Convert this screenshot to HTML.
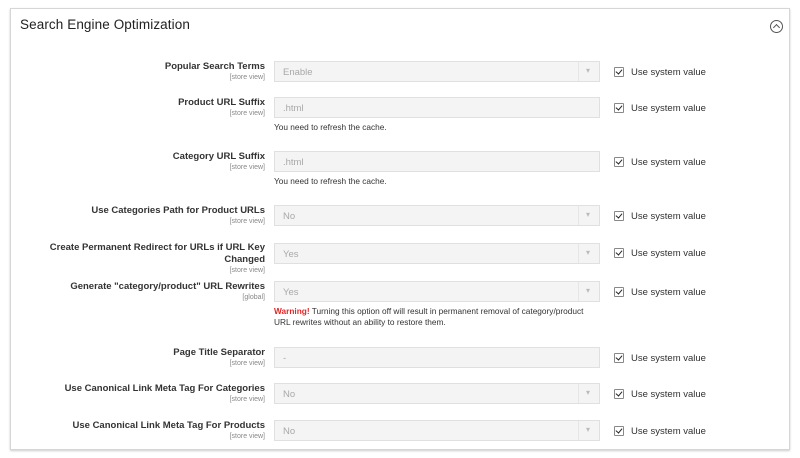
<!DOCTYPE html>
<html><head><style>
body{margin:0;width:800px;height:458px;background:#fff;font-family:"Liberation Sans",sans-serif;position:relative;overflow:hidden}
.box{position:absolute;left:10px;top:8px;width:780px;height:442px;border:1px solid #d6d6d6;box-shadow:0 1px 2px #ccc;box-sizing:border-box}
.title{position:absolute;left:20px;top:17px;font-size:13.5px;color:#222;letter-spacing:0.1px}
.tog{position:absolute;left:770px;top:20px;width:11px;height:11px;border:1px solid #555;border-radius:50%}
.tog:after{content:"";position:absolute;left:3px;top:4px;width:4px;height:4px;border-left:1px solid #555;border-top:1px solid #555;transform:rotate(45deg)}
.lbl{position:absolute;right:535px;text-align:right;font-size:9.5px;font-weight:bold;color:#333;line-height:12px;width:230px}
.lbl small{display:block;font-weight:normal;font-size:7px;color:#888;line-height:9px}
.in{position:absolute;left:274px;width:326px;height:21px;box-sizing:border-box;border:1px solid #e0e0e0;background:#f4f4f4;font-size:9.5px;color:#a8a8a8;padding:5px 0 0 8px}
.sel:after{content:"▾";position:absolute;left:311px;top:4px;font-size:8px;color:#bbb}
.sel:before{content:"";position:absolute;left:303px;top:0;bottom:0;border-left:1px solid #e6e6e6}
.cb{position:absolute;left:614px;width:10px;height:10px;border:1px solid #888;box-sizing:border-box;border-radius:1px}
.cb:after{content:"";position:absolute;left:2px;top:0px;width:3px;height:5px;border-right:1.5px solid #222;border-bottom:1.5px solid #222;transform:rotate(40deg)}
.cbl{position:absolute;left:631px;font-size:9.5px;color:#303030}
.note{position:absolute;left:274px;font-size:8.3px;color:#333;line-height:11px}
.note b{color:#e22626}
</style></head><body>
<div class="box"></div>
<div class="title">Search Engine Optimization</div>
<div class="tog"></div>

<div class="lbl" style="top:61px">Popular Search Terms<small>[store view]</small></div>
<div class="in sel" style="top:61px">Enable</div>
<div class="cb" style="top:67px"></div><div class="cbl" style="top:67px">Use system value</div>

<div class="lbl" style="top:97px">Product URL Suffix<small>[store view]</small></div>
<div class="in" style="top:97px">.html</div>
<div class="note" style="top:122px">You need to refresh the cache.</div>
<div class="cb" style="top:103px"></div><div class="cbl" style="top:103px">Use system value</div>

<div class="lbl" style="top:151px">Category URL Suffix<small>[store view]</small></div>
<div class="in" style="top:151px">.html</div>
<div class="note" style="top:176px">You need to refresh the cache.</div>
<div class="cb" style="top:157px"></div><div class="cbl" style="top:157px">Use system value</div>

<div class="lbl" style="top:205px">Use Categories Path for Product URLs<small>[store view]</small></div>
<div class="in sel" style="top:205px">No</div>
<div class="cb" style="top:211px"></div><div class="cbl" style="top:211px">Use system value</div>

<div class="lbl" style="top:242px">Create Permanent Redirect for URLs if URL Key Changed<small>[store view]</small></div>
<div class="in sel" style="top:243px">Yes</div>
<div class="cb" style="top:248px"></div><div class="cbl" style="top:248px">Use system value</div>

<div class="lbl" style="top:281px">Generate "category/product" URL Rewrites<small>[global]</small></div>
<div class="in sel" style="top:281px">Yes</div>
<div class="note" style="top:306px"><b>Warning!</b> Turning this option off will result in permanent removal of category/product<br>URL rewrites without an ability to restore them.</div>
<div class="cb" style="top:287px"></div><div class="cbl" style="top:287px">Use system value</div>

<div class="lbl" style="top:347px">Page Title Separator<small>[store view]</small></div>
<div class="in" style="top:347px">-</div>
<div class="cb" style="top:353px"></div><div class="cbl" style="top:353px">Use system value</div>

<div class="lbl" style="top:383px">Use Canonical Link Meta Tag For Categories<small>[store view]</small></div>
<div class="in sel" style="top:383px">No</div>
<div class="cb" style="top:389px"></div><div class="cbl" style="top:389px">Use system value</div>

<div class="lbl" style="top:420px">Use Canonical Link Meta Tag For Products<small>[store view]</small></div>
<div class="in sel" style="top:420px">No</div>
<div class="cb" style="top:426px"></div><div class="cbl" style="top:426px">Use system value</div>
</body></html>
